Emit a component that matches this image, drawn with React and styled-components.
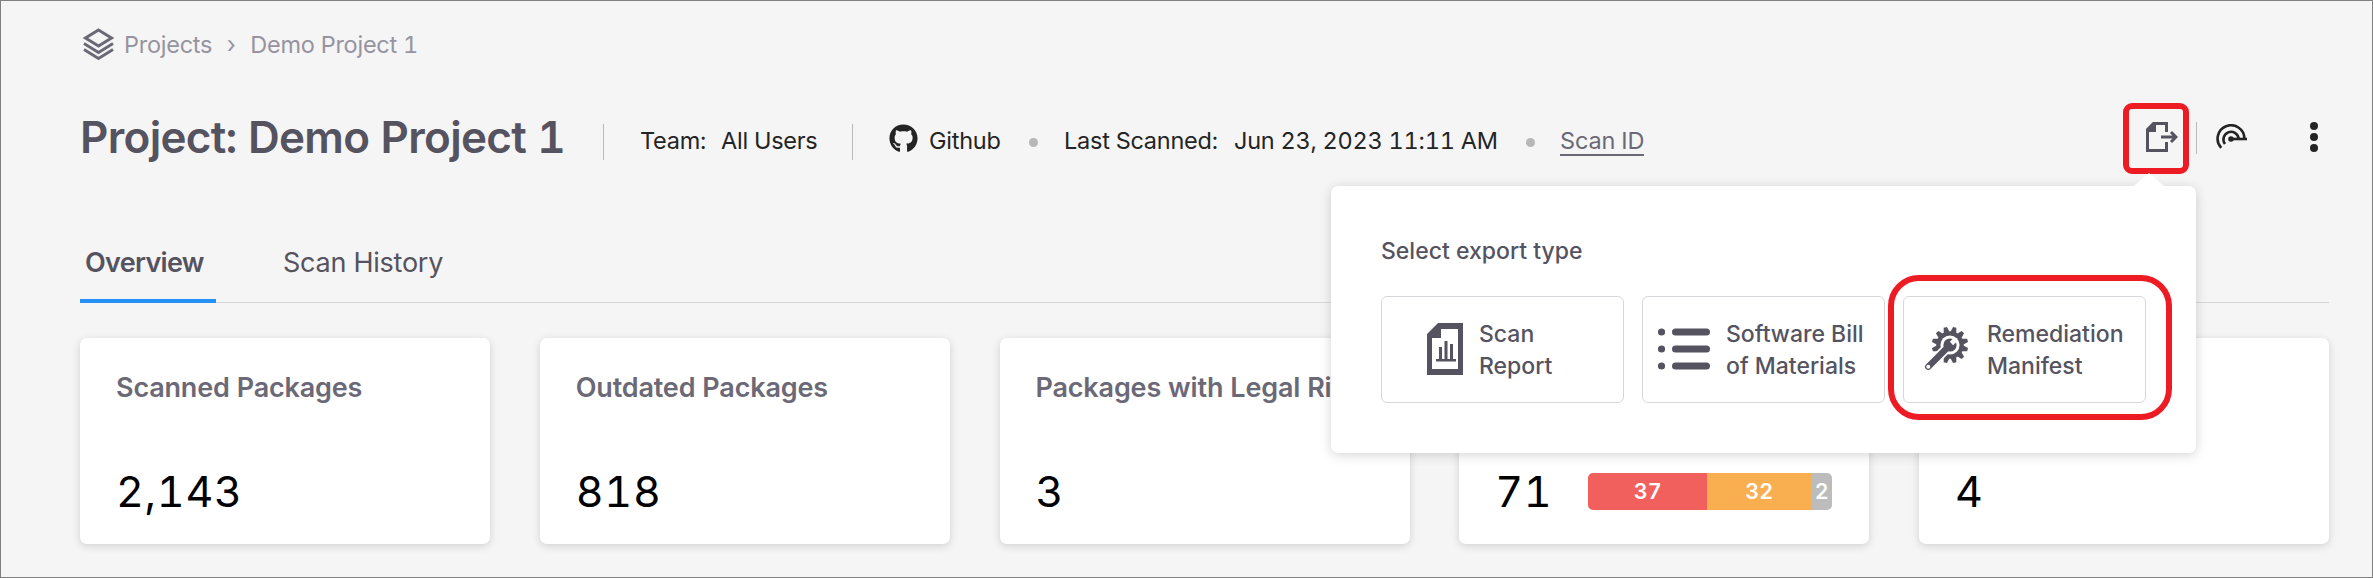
import * as React from "react";
import styled, { createGlobalStyle } from "styled-components";
import { FaGithub } from "react-icons/fa";

const GlobalStyles = createGlobalStyle`
  html {
    --page: #f5f5f5;
    --ink: #55535f;
    --muted: #6c6977;
    --line: #d8d8dc;
    --red: #ed1c24;
    box-sizing: border-box;
  }
  *, *:before, *:after {
    box-sizing: inherit;
  }
  body {
    margin: 0;
    font-family: Inter, "Liberation Sans", sans-serif;
    font-variant-numeric: tabular-nums;
  }
`;

const PageStyles = styled.main`
  height: 578px;
  padding: 0 43px 0 79px;
  background: var(--page);
  border: 1px solid #808080;
  overflow: hidden;
  white-space: nowrap;
  svg {
    display: block;
    flex: none;
  }
`;

const Breadcrumb = styled.nav`
  display: flex;
  align-items: center;
  height: 42px;
  margin-top: 22px;
  padding-left: 3px;
  color: #9694a0;
  font-size: 23.5px;
  svg {
    color: var(--muted);
    margin-right: 10px;
  }
`;

const Crumb = styled.span`
  letter-spacing: -0.25px;
`;

const Chevron = styled.span`
  width: 38px;
  text-align: center;
`;

const Header = styled.header`
  display: flex;
  align-items: center;
  height: 72px;
  margin-top: 37px;
`;

const Title = styled.h1`
  width: 523px;
  margin: -3px 0 0;
  color: var(--ink);
  font-size: 44px;
  font-weight: 600;
  line-height: 72px;
  letter-spacing: -0.68px;
`;

const Divider = styled.span`
  flex: none;
  width: 1px;
  height: ${({ $height }) => $height || 36}px;
  margin-top: ${({ $top }) => $top || 0}px;
  margin-left: ${({ $gap }) => $gap || 0}px;
  background: #b9b9b9;
`;

const Meta = styled.div`
  display: flex;
  align-items: center;
  flex: none;
  width: ${({ $width }) => ($width ? `${$width}px` : "auto")};
  padding-left: ${({ $indent }) => $indent || 0}px;
  margin-top: 5px;
  color: #242424;
  font-size: 23.5px;
  svg {
    margin-top: -5px;
    margin-right: 11px;
  }
`;

const MetaText = styled.span`
  flex: none;
  width: ${({ $width }) => ($width ? `${$width}px` : "auto")};
  letter-spacing: ${({ $spacing = -0.25 }) => $spacing}px;
`;

const Dot = styled.i`
  flex: none;
  width: 9px;
  height: 9px;
  margin: 3px 26px 0 0;
  border-radius: 50%;
  background: #b7b7b7;
`;

const ScanLink = styled.a`
  margin: 3px 0 0 -1px;
  color: var(--muted);
  line-height: 26px;
  letter-spacing: -0.15px;
  border-bottom: 2px solid var(--muted);
`;

const Actions = styled.div`
  display: flex;
  align-items: center;
  margin-left: auto;
  padding-right: 11px;
  height: 72px;
`;

const ExportAnchor = styled.div`
  position: relative;
`;

const ExportButton = styled.button`
  display: flex;
  align-items: flex-start;
  width: 66px;
  height: 71px;
  padding: 13px 0 0 17px;
  color: var(--ink);
  background: transparent;
  border: 6px solid var(--red);
  border-radius: 9px;
`;

const IconButton = styled.button`
  display: block;
  padding: 0;
  margin: -3px 0 0 ${({ $gap }) => $gap}px;
  color: #242424;
  background: transparent;
  border: 0;
`;

const Popover = styled.section`
  position: absolute;
  z-index: 2;
  top: 83px;
  right: -7px;
  width: 865px;
  height: 267px;
  padding: 49px 50px;
  background: white;
  border-radius: 7px;
  box-shadow: 0 2px 12px rgba(0, 0, 0, 0.17);
`;

const PopoverArrow = styled.svg`
  position: absolute;
  top: -13px;
  right: 29px;
`;

const PopoverTitle = styled.h2`
  margin: 0 0 29px;
  color: var(--ink);
  font-size: 23px;
  font-weight: 500;
  line-height: 32px;
`;

const Options = styled.div`
  display: flex;
  gap: 18px;
`;

const Option = styled.button`
  position: relative;
  display: flex;
  align-items: center;
  flex: none;
  width: 243px;
  height: 107px;
  padding: 0 0 0 ${({ $indent }) => $indent}px;
  color: var(--ink);
  background: white;
  border: 1px solid var(--line);
  border-radius: 6px;
  font: 500 23px/32px Inter, "Liberation Sans", sans-serif;
  text-align: left;
`;

const OptionLabel = styled.span`
  margin: 2px 0 0 ${({ $gap }) => $gap}px;
  white-space: pre-line;
`;

const Highlight = styled.span`
  position: absolute;
  top: -22px;
  left: -16px;
  width: 284px;
  height: 145px;
  border: 6px solid var(--red);
  border-radius: 31px;
`;

const Tabs = styled.div`
  display: flex;
  height: 79px;
  margin-top: 50px;
  border-bottom: 1px solid var(--line);
`;

const Tab = styled.button`
  height: 79px;
  width: ${({ $width }) => $width}px;
  margin-right: 62px;
  padding: 1px 6px 0 5px;
  color: var(--ink);
  background: none;
  border: 0;
  border-bottom: 4px solid ${({ $active }) => ($active ? "#2591f6" : "transparent")};
  font: ${({ $active }) => ($active ? 600 : 400)} 27px/71px Inter, sans-serif;
  letter-spacing: ${({ $active }) => ($active ? -0.7 : -0.25)}px;
  text-align: left;
`;

const Cards = styled.div`
  display: grid;
  grid-template-columns: repeat(5, 410px);
  justify-content: space-between;
  margin-top: 35px;
`;

const Card = styled.article`
  height: 206px;
  padding: 30px 37px;
  background: white;
  border-radius: 7px;
  box-shadow: 0 2px 8px rgba(0, 0, 0, 0.15);
`;

const CardTitle = styled.h3`
  margin: 0 0 0 -1px;
  color: var(--muted);
  font-size: 27px;
  font-weight: 600;
  line-height: 40px;
  letter-spacing: -0.18px;
`;

const CardBody = styled.div`
  display: flex;
  align-items: center;
  height: 60px;
  margin-top: 53px;
`;

const Count = styled.span`
  flex: none;
  margin-left: -1px;
  color: black;
  font-size: 43px;
  letter-spacing: 0.7px;
  width: ${({ $fixed }) => ($fixed ? "93px" : "auto")};
`;

const Bar = styled.div`
  display: flex;
  width: 244px;
  height: 37px;
  border-radius: 5px;
  overflow: hidden;
`;

const Segment = styled.span`
  width: ${({ $width }) => $width}px;
  background: ${({ $color }) => $color};
  color: white;
  font-size: 21.5px;
  font-weight: 600;
  line-height: 37px;
  text-align: center;
`;

const LayersIcon = () => (
  <svg width="31" height="32" viewBox="0 0 31 32" fill="none" stroke="currentColor" strokeWidth="2.9">
    <path d="M15.5 2 28.5 10 15.5 18 2.5 10Z" />
    <path d="m1 15.5 14.5 9 14.5-9M1 21.5l14.5 9 14.5-9" />
  </svg>
);

const ExportIcon = () => (
  <svg width="32" height="31" viewBox="0 0 32 31" fill="none" stroke="currentColor" strokeWidth="3">
    <path d="M20.5 10V1.5H8L1.5 8v20.5h19V20" />
    <path d="M7 0h3v10H0V7z" fill="currentColor" stroke="none" />
    <path d="M15 15h15m-5-5 5 5-5 5" />
  </svg>
);

const RadarIcon = () => (
  <svg width="31" height="26" viewBox="0 0 31 26" fill="none" stroke="currentColor" strokeWidth="2.6">
    <path d="M5.2 23.8A13.4 13.4 0 1 1 28.4 14.5" />
    <path d="M9 20A7.6 7.6 0 1 1 22.6 14.5" />
    <path d="M15 15h16" />
    <circle cx="15" cy="15" r="2.8" fill="currentColor" stroke="none" />
  </svg>
);

const MoreIcon = () => (
  <svg width="8" height="30" viewBox="0 0 8 30" fill="currentColor">
    <circle cx="4" cy="4" r="4" />
    <circle cx="4" cy="15" r="4" />
    <circle cx="4" cy="26" r="4" />
  </svg>
);

const ReportIcon = () => (
  <svg width="36" height="52" viewBox="0 0 36 52" fill="currentColor">
    <path fillRule="evenodd" d="M11 0h25v52H0V11zM14 6v9H5v31h26V6z" />
    <path d="M9 36h20v2.5H9zM12 24h3v12h-3zM17.5 18h3v18h-3zM23 21h3v15h-3z" />
  </svg>
);

const ListIcon = () => (
  <svg width="52" height="42" viewBox="0 0 52 42" fill="currentColor">
    {[4, 21, 38].map((y) => (
      <g key={y}>
        <circle cx="3.5" cy={y} r="3.6" />
        <rect x="14" y={y - 3.5} width="38" height="7" rx="3.5" />
      </g>
    ))}
  </svg>
);

const teeth = Array.from({ length: 12 }, (_, i) => i * 30 + 15);

const WrenchIcon = () => (
  <svg width="45" height="46" viewBox="0 0 45 46">
    <g fill="currentColor">
      {teeth.map((angle) => (
        <path key={angle} d="M23 6 24.3 0.8h3.4L29 6z" transform={`rotate(${angle} 26 19)`} />
      ))}
      <circle cx="26" cy="19" r="13.8" />
    </g>
    <circle cx="26" cy="19" r="9.6" fill="white" />
    <path d="M21 24 4 41" stroke="white" strokeWidth="10" />
    <circle cx="26" cy="19" r="6.6" fill="currentColor" />
    <path d="M23 22 4.3 40.7" stroke="currentColor" strokeWidth="6.5" strokeLinecap="round" />
    <path d="M27.5 17.5 32 13" stroke="white" strokeWidth="4.6" />
    <circle cx="4.3" cy="40.7" r="2" fill="white" />
  </svg>
);

const exportTypes = [
  { label: "Scan\nReport", icon: <ReportIcon />, indent: 45, gap: 16 },
  { label: "Software Bill\nof Materials", icon: <ListIcon />, indent: 15, gap: 16 },
  { label: "Remediation\nManifest", icon: <WrenchIcon />, indent: 20, gap: 18, highlighted: true },
];

const stats = [
  { title: "Scanned Packages", count: "2,143" },
  { title: "Outdated Packages", count: "818" },
  { title: "Packages with Legal Risks", count: "3" },
  {
    count: "71",
    segments: [
      { value: 37, width: 119, color: "#f2605d" },
      { value: 32, width: 104, color: "#f9af4f" },
      { value: 2, width: 21, color: "#bcbcbc" },
    ],
  },
  { count: "4" },
];

function ExportMenu() {
  return (
    <Popover>
      <PopoverArrow width="36" height="14" viewBox="0 0 36 14">
        <path d="M0 14C6 12 8 8 18 0 28 8 30 12 36 14Z" fill="white" />
      </PopoverArrow>
      <PopoverTitle>Select export type</PopoverTitle>
      <Options>
        {exportTypes.map(({ label, icon, indent, gap, highlighted }) => (
          <Option key={label} $indent={indent}>
            {icon}
            <OptionLabel $gap={gap}>{label}</OptionLabel>
            {highlighted && <Highlight />}
          </Option>
        ))}
      </Options>
    </Popover>
  );
}

function StatCard({ title, count, segments }) {
  return (
    <Card>
      <CardTitle>{title || "\u00a0"}</CardTitle>
      <CardBody>
        <Count $fixed={Boolean(segments)}>{count}</Count>
        {segments && (
          <Bar>
            {segments.map(({ value, width, color }) => (
              <Segment key={value} $width={width} $color={color}>
                {value}
              </Segment>
            ))}
          </Bar>
        )}
      </CardBody>
    </Card>
  );
}

export default function App() {
  return (
    <>
      <GlobalStyles />
      <PageStyles>
        <Breadcrumb>
          <LayersIcon />
          <Crumb>Projects</Crumb>
          <Chevron>›</Chevron>
          <Crumb>Demo Project 1</Crumb>
        </Breadcrumb>
        <Header>
          <Title>Project: Demo Project 1</Title>
          <Divider $top={8} />
          <Meta $width={248} $indent={36}>
            <MetaText $width={81}>Team:</MetaText>
            <MetaText>All Users</MetaText>
          </Meta>
          <Divider $top={8} />
          <Meta $width={176} $indent={36}>
            <FaGithub size={29} />
            <MetaText>Github</MetaText>
          </Meta>
          <Meta $width={497}>
            <Dot />
            <MetaText $width={170}>Last Scanned:</MetaText>
            <MetaText $spacing={-0.25}>Jun 23, 2023 11:11 AM</MetaText>
          </Meta>
          <Meta>
            <Dot />
            <ScanLink>Scan ID</ScanLink>
          </Meta>
          <Actions>
            <ExportAnchor>
              <ExportButton aria-label="Export">
                <ExportIcon />
              </ExportButton>
              <ExportMenu />
            </ExportAnchor>
            <Divider $height={32} $gap={7} />
            <IconButton $gap={19} aria-label="Monitor">
              <RadarIcon />
            </IconButton>
            <IconButton $gap={63} aria-label="More">
              <MoreIcon />
            </IconButton>
          </Actions>
        </Header>
        <Tabs>
          <Tab $active $width={136}>
            Overview
          </Tab>
          <Tab $width={174}>Scan History</Tab>
        </Tabs>
        <Cards>
          {stats.map((stat) => (
            <StatCard key={stat.count} {...stat} />
          ))}
        </Cards>
      </PageStyles>
    </>
  );
}
